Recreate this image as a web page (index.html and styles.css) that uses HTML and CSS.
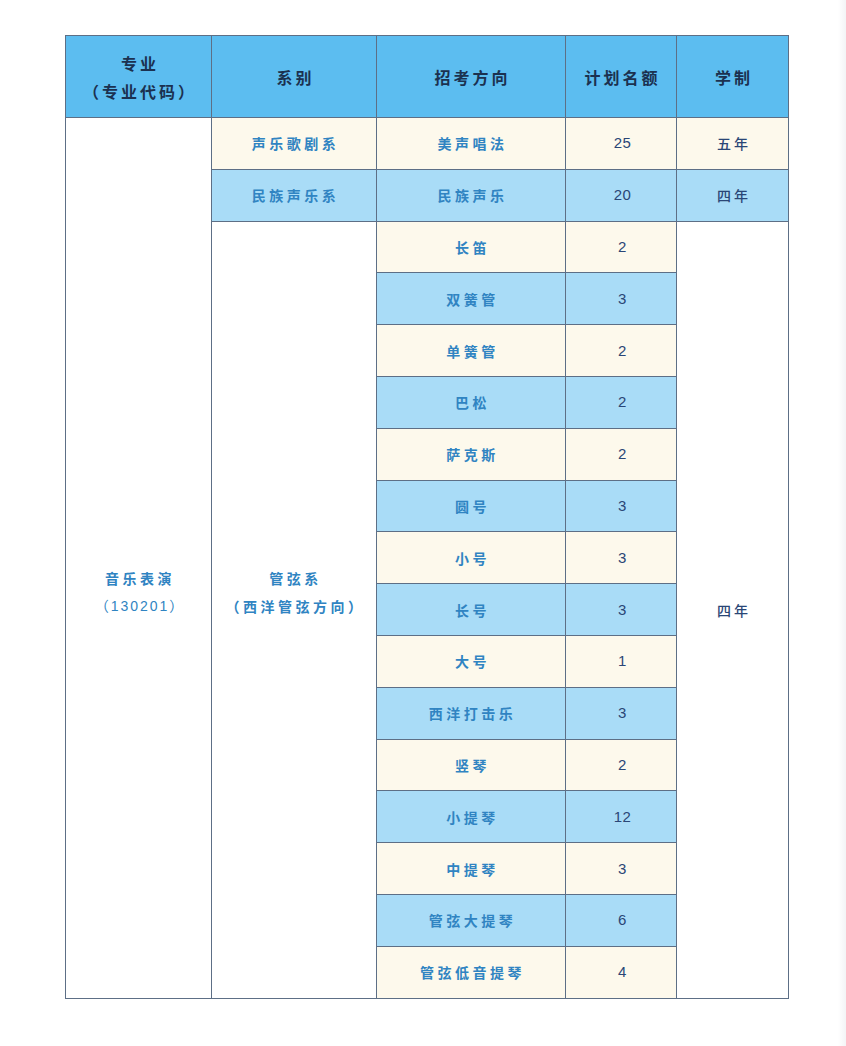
FILE: index.html
```html
<!DOCTYPE html>
<html lang="zh">
<head>
<meta charset="utf-8">
<title>招生计划</title>
<link rel="stylesheet" href="styles.css">
</head>
<body>
<div class="page">
  <table class="plan">
    <colgroup>
      <col class="c1"><col class="c2"><col class="c3"><col class="c4"><col class="c5">
    </colgroup>
    <thead>
      <tr>
        <th><span class="l">专业</span><span class="l">（专业代码）</span></th>
        <th>系别</th>
        <th>招考方向</th>
        <th>计划名额</th>
        <th>学制</th>
      </tr>
    </thead>
    <tbody>
      <tr class="cream">
        <td rowspan="17" class="span major"><span class="l">音乐表演</span><span class="l num-l">（130201）</span></td>
        <td>声乐歌剧系</td><td>美声唱法</td><td class="n">25</td><td class="y">五年</td>
      </tr>
      <tr class="blue">
        <td>民族声乐系</td><td>民族声乐</td><td class="n">20</td><td class="y">四年</td>
      </tr>
      <tr class="cream">
        <td rowspan="15" class="span dept"><span class="l">管弦系</span><span class="l">（西洋管弦方向）</span></td>
        <td>长笛</td><td class="n">2</td>
        <td rowspan="15" class="span y">四年</td>
      </tr>
      <tr class="blue"><td>双簧管</td><td class="n">3</td></tr>
      <tr class="cream"><td>单簧管</td><td class="n">2</td></tr>
      <tr class="blue"><td>巴松</td><td class="n">2</td></tr>
      <tr class="cream"><td>萨克斯</td><td class="n">2</td></tr>
      <tr class="blue"><td>圆号</td><td class="n">3</td></tr>
      <tr class="cream"><td>小号</td><td class="n">3</td></tr>
      <tr class="blue"><td>长号</td><td class="n">3</td></tr>
      <tr class="cream"><td>大号</td><td class="n">1</td></tr>
      <tr class="blue"><td>西洋打击乐</td><td class="n">3</td></tr>
      <tr class="cream"><td>竖琴</td><td class="n">2</td></tr>
      <tr class="blue"><td>小提琴</td><td class="n">12</td></tr>
      <tr class="cream"><td>中提琴</td><td class="n">3</td></tr>
      <tr class="blue"><td>管弦大提琴</td><td class="n">6</td></tr>
      <tr class="cream"><td>管弦低音提琴</td><td class="n">4</td></tr>
    </tbody>
  </table>
</div>
</body>
</html>
```

FILE: styles.css
```css
html, body {
  margin: 0;
  padding: 0;
  background: #ffffff;
}
.page {
  width: 846px;
  height: 1046px;
  box-sizing: border-box;
  padding: 35px 0 0 65px;
  background: linear-gradient(90deg, #ffffff 0, #ffffff 838px, #f3f4f6 846px);
  font-family: "Noto Sans CJK SC", "Liberation Sans", sans-serif;
}
.plan {
  border-collapse: collapse;
  table-layout: fixed;
  width: 723px;
}
.c1 { width: 146px; }
.c2 { width: 165px; }
.c3 { width: 189px; }
.c4 { width: 111px; }
.c5 { width: 112px; }
.plan th,
.plan td {
  border: 1px solid #5d6f86;
  text-align: center;
  vertical-align: middle;
  padding: 0 0 0 3px;
}
.plan thead tr {
  height: 82px;
}
.plan th {
  background: #5cbdf0;
  color: #1b3150;
  font-size: 16px;
  font-weight: 700;
  letter-spacing: 3px;
  line-height: 28px;
}
.plan tbody tr {
  height: 51.8px;
}
.plan td {
  color: #3084c2;
  font-size: 14px;
  font-weight: 700;
  letter-spacing: 3.5px;
  line-height: 28px;
}
.plan tr.cream td { background: #fdf9ec; }
.plan tr.blue td { background: #a9dcf7; }
.plan tr td.span { background: #ffffff; }
.plan tr td.n {
  font-family: "Liberation Sans", sans-serif;
  font-weight: 400;
  font-size: 15px;
  letter-spacing: 0.5px;
  color: #2a4676;
}
.plan tr td.y {
  color: #2a4676;
  font-weight: 500;
  letter-spacing: 3px;
}
.l { display: block; }
.num-l {
  font-family: "Liberation Sans", "Noto Sans CJK SC", sans-serif;
  font-weight: 400;
  letter-spacing: 2px;
}
.plan td.major { padding-top: 69px; }
.plan td.dept { padding-bottom: 35px; }
```
